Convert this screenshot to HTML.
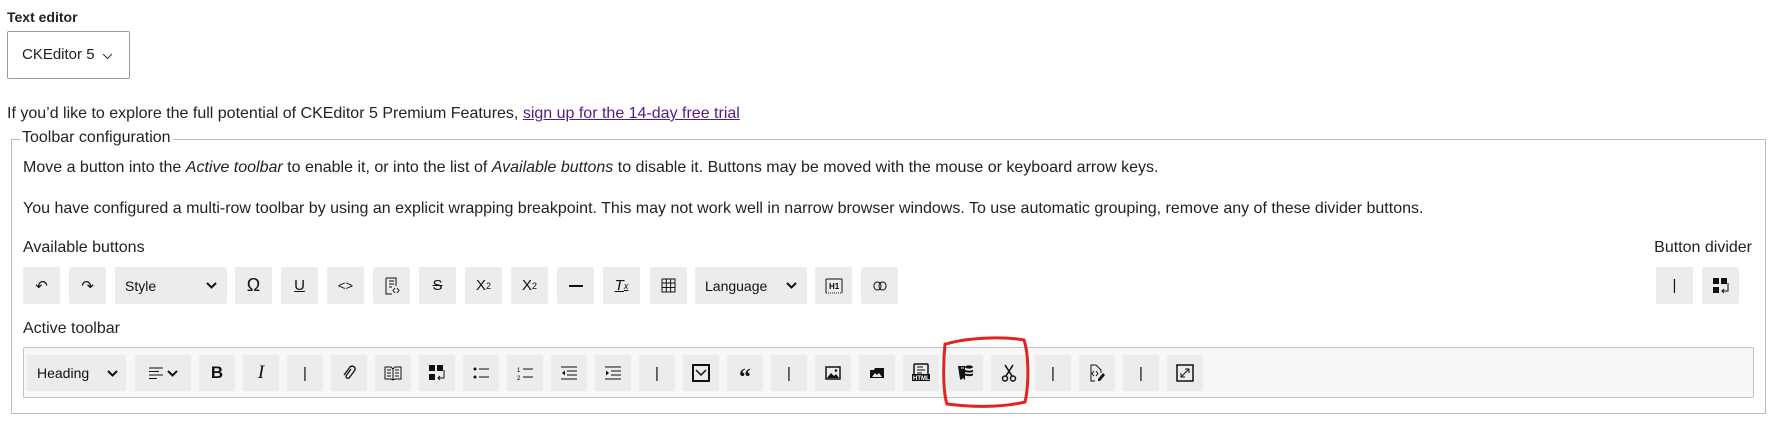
<!DOCTYPE html>
<html><head><meta charset="utf-8"><style>
*{box-sizing:border-box;margin:0;padding:0}
body{width:1777px;height:425px;background:#fff;font-family:"Liberation Sans",sans-serif;font-size:16px;color:#222;position:relative;overflow:hidden}
.a{position:absolute;white-space:nowrap}
.b{position:absolute;width:37px;height:37px;background:#ececec;border-radius:2px;display:flex;align-items:center;justify-content:center;color:#111;font-size:15px}
.t .b{width:36px;height:36px;top:355px}
.r1 .b{top:267px}
svg{display:block}
</style></head><body>
<div class="a" style="left:7px;top:9px;font-weight:bold;font-size:14px">Text editor</div>
<div class="a" style="left:7px;top:31px;width:123px;height:48px;border:1px solid #999;border-radius:2px;font-size:15px"><span class="a" style="left:14px;top:14px">CKEditor 5</span><svg class="a" style="left:94px;top:21px" width="11" height="7"><path d="M1 1l4.5 4.5L10 1" stroke="#333" fill="none"/></svg></div>
<div class="a" style="left:7px;top:105px">If you’d like to explore the full potential of CKEditor 5 Premium Features, <span style="color:#551a8b;text-decoration:underline">sign up for the 14-day free trial</span></div>
<div class="a" style="left:11px;top:139px;width:1755px;height:275px;border:1px solid #bbb"></div>
<div class="a" style="left:20px;top:129px;background:#fff;padding:0 2px">Toolbar configuration</div>
<div class="a" style="left:23px;top:159px">Move a button into the <i>Active toolbar</i> to enable it, or into the list of <i>Available buttons</i> to disable it. Buttons may be moved with the mouse or keyboard arrow keys.</div>
<div class="a" style="left:23px;top:200px">You have configured a multi-row toolbar by using an explicit wrapping breakpoint. This may not work well in narrow browser windows. To use automatic grouping, remove any of these divider buttons.</div>
<div class="a" style="left:23px;top:239px">Available buttons</div>
<div class="a" style="right:25px;top:239px">Button divider</div>
<div class="r1">
<div class="b" style="left:23px">↶</div>
<div class="b" style="left:69px">↷</div>
<div class="b" style="left:115px;width:112px;justify-content:space-between;padding:0 10px;font-size:14px">Style<svg width="11" height="7"><path d="M1 1l4.5 4.5L10 1" stroke="#111" stroke-width="2" fill="none"/></svg></div>
<div class="b" style="left:235px;font-size:18px">Ω</div>
<div class="b" style="left:281px;text-decoration:underline">U</div>
<div class="b" style="left:327px;font-size:13px">&lt;&gt;</div>
<div class="b" style="left:373px"><svg width="16" height="18"><path d="M2 1h10v8M2 1v16h6M5 4h5M5 7h5M5 10h3" stroke="#111" fill="none"/><path d="M11 11l-2 2.5 2 2.5M13 11l2 2.5-2 2.5" stroke="#111" fill="none"/></svg></div>
<div class="b" style="left:419px;text-decoration:line-through">S</div>
<div class="b" style="left:465px">X<sub style="font-size:9px">2</sub></div>
<div class="b" style="left:511px">X<sup style="font-size:9px">2</sup></div>
<div class="b" style="left:557px"><div style="width:14px;height:2px;background:#111"></div></div>
<div class="b" style="left:603px;font-style:italic;text-decoration:underline">T<sub style="font-size:9px">x</sub></div>
<div class="b" style="left:650px"><svg width="15" height="15"><path d="M1 1h13v13H1zM1 5h13M1 9.5h13M5.3 1v13M9.6 1v13" stroke="#111" fill="none"/></svg></div>
<div class="b" style="left:695px;width:112px;justify-content:space-between;padding:0 10px;font-size:14px">Language<svg width="11" height="7"><path d="M1 1l4.5 4.5L10 1" stroke="#111" stroke-width="2" fill="none"/></svg></div>
<div class="b" style="left:815px"><svg width="18" height="16"><path d="M1 1h16M1 1v14M17 1v14" stroke="#111" fill="none"/><path d="M1 15h16" stroke="#111" stroke-dasharray="1 1"/><text x="4" y="11" font-size="8" font-weight="bold" font-family="Liberation Sans">H1</text></svg></div>
<div class="b" style="left:861px"><svg width="14" height="10"><rect x="1" y="1" width="7" height="8" rx="3.5" stroke="#111" fill="none"/><rect x="6" y="1" width="7" height="8" rx="3.5" stroke="#111" fill="none"/></svg></div>
<div class="b" style="left:1656px">|</div>
<div class="b" style="left:1702px"><svg width="18" height="18"><rect x="1" y="1" width="6" height="6" fill="#111"/><rect x="9" y="1" width="6" height="6" fill="#111"/><rect x="1" y="10" width="6" height="6" fill="#111"/><path d="M16 6v8h-6M12 12l-2 2 2 2" stroke="#111" fill="none"/></svg></div>
</div>
<div class="a" style="left:23px;top:320px">Active toolbar</div>
<div class="a" style="left:23px;top:347px;width:1731px;height:51px;background:#f7f7f7;border:1px solid #c4c4c4;border-radius:2px"></div>
<div class="t">
<div class="b" style="left:27px;width:99px;justify-content:space-between;padding:0 8px 0 10px;font-size:14px">Heading<svg width="11" height="7"><path d="M1 1l4.5 4.5L10 1" stroke="#111" stroke-width="2" fill="none"/></svg></div>
<div class="b" style="left:135px;width:56px;gap:4px"><svg width="14" height="12"><path d="M0 1h14M0 4.5h10M0 8h14M0 11.5h8" stroke="#111"/></svg><svg width="11" height="7"><path d="M1 1l4.5 4.5L10 1" stroke="#111" stroke-width="2" fill="none"/></svg></div>
<div class="b" style="left:199px;font-weight:bold;font-size:17px">B</div>
<div class="b" style="left:243px;font-style:italic;font-family:'Liberation Serif';font-size:19px">I</div>
<div class="b" style="left:287px">|</div>
<div class="b" style="left:331px"><svg width="14" height="16"><path d="M9 4L4 11a2 2 0 0 0 3 2l6-8a3 3 0 0 0-5-3L2 10" stroke="#111" fill="none" stroke-width="1.3"/></svg></div>
<div class="b" style="left:375px"><svg width="18" height="16"><path d="M1 2h6l2 2 2-2h6v12h-6l-2 1-2-1H1zM9 4v11M3 5h4M3 8h4M3 11h4M11 5h4M11 8h4M11 11h4" stroke="#111" fill="none"/></svg></div>
<div class="b" style="left:419px"><svg width="18" height="18"><rect x="1" y="1" width="6" height="6" fill="#111"/><rect x="9" y="1" width="6" height="6" fill="#111"/><rect x="1" y="10" width="6" height="6" fill="#111"/><path d="M16 6v8h-6M12 12l-2 2 2 2" stroke="#111" fill="none"/></svg></div>
<div class="b" style="left:463px"><svg width="16" height="12"><circle cx="2" cy="2" r="1.5" fill="#111"/><circle cx="2" cy="10" r="1.5" fill="#111"/><path d="M6 2h10M6 10h10" stroke="#111"/></svg></div>
<div class="b" style="left:507px"><svg width="16" height="14"><text x="0" y="6" font-size="6" font-family="Liberation Sans">1</text><text x="0" y="14" font-size="6" font-family="Liberation Sans">2</text><path d="M6 3h10M6 11h10" stroke="#111"/></svg></div>
<div class="b" style="left:551px"><svg width="16" height="14"><path d="M0 1h16M6 5h10M6 9h10M0 13h16" stroke="#111"/><path d="M4 4.5L1 7l3 2.5z" fill="#111"/></svg></div>
<div class="b" style="left:595px"><svg width="16" height="14"><path d="M0 1h16M6 5h10M6 9h10M0 13h16" stroke="#111"/><path d="M1 4.5L4 7l-3 2.5z" fill="#111"/></svg></div>
<div class="b" style="left:639px">|</div>
<div class="b" style="left:683px"><svg width="18" height="18"><rect x="1" y="1" width="16" height="16" stroke="#111" stroke-width="2" fill="none"/><path d="M4 6l5 5 5-5" stroke="#111" stroke-width="1.5" fill="none"/></svg></div>
<div class="b" style="left:727px;font-weight:bold;font-size:24px;padding-top:10px;font-family:'Liberation Serif'">“</div>
<div class="b" style="left:771px">|</div>
<div class="b" style="left:815px"><svg width="16" height="14"><rect x="1" y="1" width="14" height="12" stroke="#111" stroke-width="1.5" fill="none"/><path d="M2 12l4-5 3 3 2-2 3 4z" fill="#111"/><circle cx="11" cy="4.5" r="1.3" fill="#111"/></svg></div>
<div class="b" style="left:859px"><svg width="16" height="14"><path d="M1 4h4l1-2h9v10H1z" fill="#111"/><path d="M3 11l3-4 2 2 2-2 3 4z" fill="#eee"/></svg></div>
<div class="b" style="left:903px"><svg width="20" height="20"><rect x="3" y="1" width="14" height="14" rx="1" stroke="#111" stroke-width="1.5" fill="none"/><path d="M6 4h6M6 7h8M6 10h5" stroke="#111"/><rect x="1" y="11" width="18" height="7" fill="#111"/><text x="2" y="17" font-size="6" fill="#fff" font-family="Liberation Sans" font-weight="bold">HTML</text></svg></div>
<div class="b" style="left:947px"><svg width="18" height="18"><path d="M2 2h7v14l-2-2-2 2-1-1z" fill="#111"/><path d="M5 4h3" stroke="#fff"/><ellipse cx="13" cy="3" rx="4" ry="1.6" fill="#111"/><path d="M9 5.5c0 1.5 8 1.5 8 0v2c0 1.5-8 1.5-8 0zM9 9c0 1.5 8 1.5 8 0v2c0 1.5-8 1.5-8 0z" fill="#111"/></svg></div>
<div class="b" style="left:991px"><svg width="16" height="18"><path d="M4 1l7 11M12 1L5 12" stroke="#111" stroke-width="1.6"/><circle cx="4" cy="14.5" r="2.5" stroke="#111" stroke-width="1.5" fill="none"/><circle cx="12" cy="14.5" r="2.5" stroke="#111" stroke-width="1.5" fill="none"/></svg></div>
<div class="b" style="left:1035px">|</div>
<div class="b" style="left:1079px"><svg width="18" height="18"><path d="M8 1H3v16h4M8 1l5 5v3" stroke="#111" fill="none"/><path d="M6 7l-2 2.5 2 2.5M8 7l2 2.5-2 2.5" stroke="#111" fill="none"/><path d="M15 9l2 2-5 6h-2v-2z" fill="#111"/></svg></div>
<div class="b" style="left:1123px">|</div>
<div class="b" style="left:1167px"><svg width="18" height="18"><rect x="1" y="1" width="16" height="16" stroke="#111" stroke-width="1.5" fill="none"/><path d="M5 13l8-8M9 5h4v4M5 9v4h4" stroke="#111" fill="none"/></svg></div>
</div>
<svg class="a" style="left:0;top:0" width="1777" height="425"><path d="M946 344c20-6 55-8 78-4 5 15 5 45 1 62-25 6-55 5-78 2-4-12-4-40-2-60" stroke="#e32222" stroke-width="3" fill="none" stroke-linecap="round"/></svg>
</body></html>
